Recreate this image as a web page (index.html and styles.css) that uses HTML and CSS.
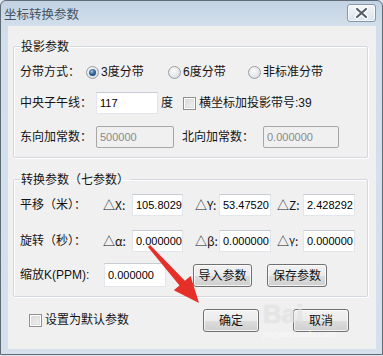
FILE: index.html
```html
<!DOCTYPE html>
<html lang="zh-CN">
<head>
<meta charset="utf-8">
<title>坐标转换参数</title>
<link rel="stylesheet" href="styles.css">
</head>
<body>
<div class="window">
  <div class="titlebar">
    <span class="title">坐标转换参数</span>
    <span class="close">
      <svg width="27" height="16" viewBox="0 0 27 16">
        <path d="M9 4 L18 12 M18 4 L9 12" stroke="#ffffff" stroke-width="4.5" stroke-linecap="round"/>
        <path d="M9 4 L18 12 M18 4 L9 12" stroke="#56606b" stroke-width="2.2" stroke-linecap="round"/>
      </svg>
    </span>
  </div>
  <div class="client">
    <fieldset class="group g1">
      <legend>投影参数</legend>
      <div class="row r1">
        <span class="lbl w66">分带方式：</span>
        <span class="opt w82"><i class="radio checked"></i>3度分带</span>
        <span class="opt w80"><i class="radio"></i>6度分带</span>
        <span class="opt"><i class="radio"></i>非标准分带</span>
      </div>
      <div class="row r2">
        <span class="lbl w76">中央子午线：</span>
        <span class="input w62">117</span>
        <span class="unit">度</span>
        <span class="opt chkopt"><i class="check"></i>横坐标加投影带号:39</span>
      </div>
      <div class="row r3">
        <span class="lbl w76">东向加常数：</span>
        <span class="input disabled w78">500000</span>
        <span class="lbl lbl2">北向加常数：</span>
        <span class="input disabled w76">0.000000</span>
      </div>
    </fieldset>

    <fieldset class="group g2">
      <legend>转换参数（七参数）</legend>
      <div class="row ra">
        <span class="lbl w83">平移（米）：</span>
        <span class="d dx">△X:</span>
        <span class="input w51">105.8029</span>
        <span class="d dy">△Y:</span>
        <span class="input w52">53.47520</span>
        <span class="d dz">△Z:</span>
        <span class="input w52">2.428292</span>
      </div>
      <div class="row rb">
        <span class="lbl w83">旋转（秒）：</span>
        <span class="d dx">△α:</span>
        <span class="input w51">0.000000</span>
        <span class="d dy">△β:</span>
        <span class="input w52">0.000000</span>
        <span class="d dz">△<sup class="gam">γ</sup>:</span>
        <span class="input w52">0.000000</span>
      </div>
      <div class="row rc">
        <span class="lbl w84">缩放K(PPM):</span>
        <span class="input tall w62">0.000000</span>
        <span class="btn b-import">导入参数</span>
        <span class="btn b-save">保存参数</span>
      </div>
    </fieldset>

    <div class="row foot">
      <span class="opt footchk"><i class="check"></i>设置为默认参数</span>
      <span class="btn b-ok">确定</span>
      <span class="btn b-cancel">取消</span>
    </div>
  </div>

  <div class="wm">
    <span class="wm-big">Bai</span>
    <span class="wm-small">jingyan.baidu.com</span>
  </div>

  <svg class="arrow" width="383" height="356" viewBox="0 0 383 356">
    <polygon points="150.1,245 184.9,280.8 190.6,276 199,303 173.8,290.2 179.5,285.4 147.9,247" fill="#e5302a"/>
  </svg>
</div>
</body>
</html>
```

FILE: styles.css
```css
* { box-sizing: border-box; }
html, body { margin: 0; padding: 0; }
body {
  width: 383px;
  height: 356px;
  overflow: hidden;
  background: #dfe6ee;
  font-family: "Liberation Sans", "Noto Sans CJK SC", sans-serif;
  font-size: 12px;
  color: #141414;
}
.window {
  position: relative;
  width: 383px;
  height: 355px;
  border: 1px solid #5f6b77;
  border-radius: 6px 6px 0 0;
  background: linear-gradient(#c3d3e4, #d2dfeb 26px, #d5e0ec);
  padding: 0 6px 5px 7px;
}
.titlebar {
  position: relative;
  height: 25px;
  display: flex;
  align-items: center;
}
.title {
  font-family: "Noto Sans CJK SC", sans-serif;
  font-size: 12.5px;
  color: #47535f;
  margin-left: -4px;
  line-height: 16px;
}
.close {
  position: absolute;
  right: 0;
  top: 3px;
  width: 29px;
  height: 18px;
  border: 1px solid #8797a8;
  border-radius: 3px;
  background: linear-gradient(#f1f5f9, #dbe4ee);
  box-shadow: inset 0 0 0 1px rgba(255,255,255,0.7);
  display: flex;
  align-items: center;
  justify-content: center;
}
.close svg { display: block; }

.client {
  height: 323px;
  background: #f0f0f0;
  padding-top: 12px;
}
.group {
  margin: 0 0 0 5px;
  width: 355px;
  border: 1px solid #d3d9de;
  border-radius: 2px;
  box-shadow: inset 1px 1px 0 #ffffff, 1px 1px 0 #ffffff;
  padding: 6px 6px 8px 6px;
  min-width: 0;
}
.group legend {
  padding: 0 1px;
  font-family: "Noto Sans CJK SC", sans-serif;
  font-size: 12px;
  line-height: 16px;
  height: 16px;
}
.g2 { margin-top: 13px; padding-bottom: 9px; }

.row {
  display: flex;
  align-items: center;
  height: 24px;
  line-height: 16px;
  white-space: nowrap;
}
.r2 { margin-top: 7px; }
.r3 { margin-top: 10px; }
.rb { margin-top: 12px; }
.rc { margin-top: 10px; }

.lbl, .opt, .unit, .d, .btn {
  font-family: "Liberation Sans", "Noto Sans CJK SC", sans-serif;
  font-size: 12px;
}
.lbl { flex: none; }
.w66 { width: 66px; }
.w76 { width: 76px; }
.w83 { width: 83px; }
.w84 { width: 84px; }
.w82 { width: 82px; }
.w80 { width: 80px; }
.w62 { width: 62px; }
.w78 { width: 78px; }
.w51 { width: 51px; }
.w52 { width: 52px; }
.lbl2 { width: 81px; margin-left: 8px; }

.opt { display: flex; align-items: center; flex: none; }
.radio {
  display: block;
  width: 13px;
  height: 13px;
  border-radius: 50%;
  border: 1px solid #9a9fa5;
  background: radial-gradient(circle at 40% 35%, #fbfbfb 0%, #e4e6e8 55%, #cfd3d7 100%);
  margin-right: 2px;
  position: relative;
}
.radio.checked::after {
  content: "";
  position: absolute;
  left: 2px;
  top: 2px;
  width: 7px;
  height: 7px;
  border-radius: 50%;
  background: radial-gradient(circle at 40% 35%, #9fc1e4 0%, #2e5d95 50%, #1b3f6b 100%);
}
.check {
  display: block;
  width: 13px;
  height: 13px;
  border: 1px solid #8f8f8f;
  background: linear-gradient(135deg, #d6d6d6, #f4f4f4);
  box-shadow: inset 0 0 0 1px #ffffff, inset 0 0 0 2px #dedede;
  margin-right: 3px;
  flex: none;
}
.unit { margin-left: 3px; width: 12px; flex: none; }
.chkopt { margin-left: 10px; }

.input {
  flex: none;
  display: flex;
  align-items: center;
  height: 22px;
  padding: 0 3px;
  background: #ffffff;
  border: 1px solid #e2e6ea;
  border-top-color: #c6ccd2;
  font-family: "Liberation Sans", sans-serif;
  font-size: 11px;
  color: #000;
}
.input.tall { height: 24px; }
.input.disabled {
  background: #f0f0f0;
  border: 1px solid #a8a8a8;
  border-radius: 2px;
  color: #8a8a8a;
}

.d {
  flex: none;
  font-family: "Noto Sans CJK SC", sans-serif;
  font-size: 12px;
}
.dx { width: 29px; }
.dy { width: 24px; margin-left: 12px; }
.dz { width: 26px; margin-left: 6px; }
.gam { font-size: 11px; vertical-align: 2px; line-height: 0; }

.btn {
  flex: none;
  display: flex;
  align-items: center;
  justify-content: center;
  height: 23px;
  border: 1px solid #707070;
  border-radius: 3px;
  background: linear-gradient(#f2f2f2 0%, #ebebeb 50%, #dddddd 51%, #cfcfcf 100%);
  box-shadow: inset 0 0 0 1px rgba(255,255,255,0.75);
  font-family: "Noto Sans CJK SC", sans-serif;
  color: #111;
}
.b-import { width: 59px; margin-left: 27px; }
.b-save { width: 60px; margin-left: 15px; }

.foot { margin-top: 11px; padding-left: 21px; }
.footchk { width: 174px; }
.b-ok { width: 56px; }
.b-cancel { width: 56px; margin-left: 34px; }

.wm {
  position: absolute;
  left: 262px;
  top: 298px;
  display: flex;
  flex-direction: column;
  pointer-events: none;
}
.wm-big {
  font-family: "Liberation Sans", sans-serif;
  font-weight: bold;
  font-size: 26px;
  line-height: 30px;
  color: rgba(255,255,255,0.45);
  text-shadow: 0 0 1px rgba(150,150,150,0.35);
}
.wm-small {
  font-family: "Liberation Sans", sans-serif;
  font-size: 9px;
  line-height: 10px;
  color: rgba(255,255,255,0.6);
}
.arrow {
  position: absolute;
  left: -1px;
  top: -1px;
  pointer-events: none;
}
```
